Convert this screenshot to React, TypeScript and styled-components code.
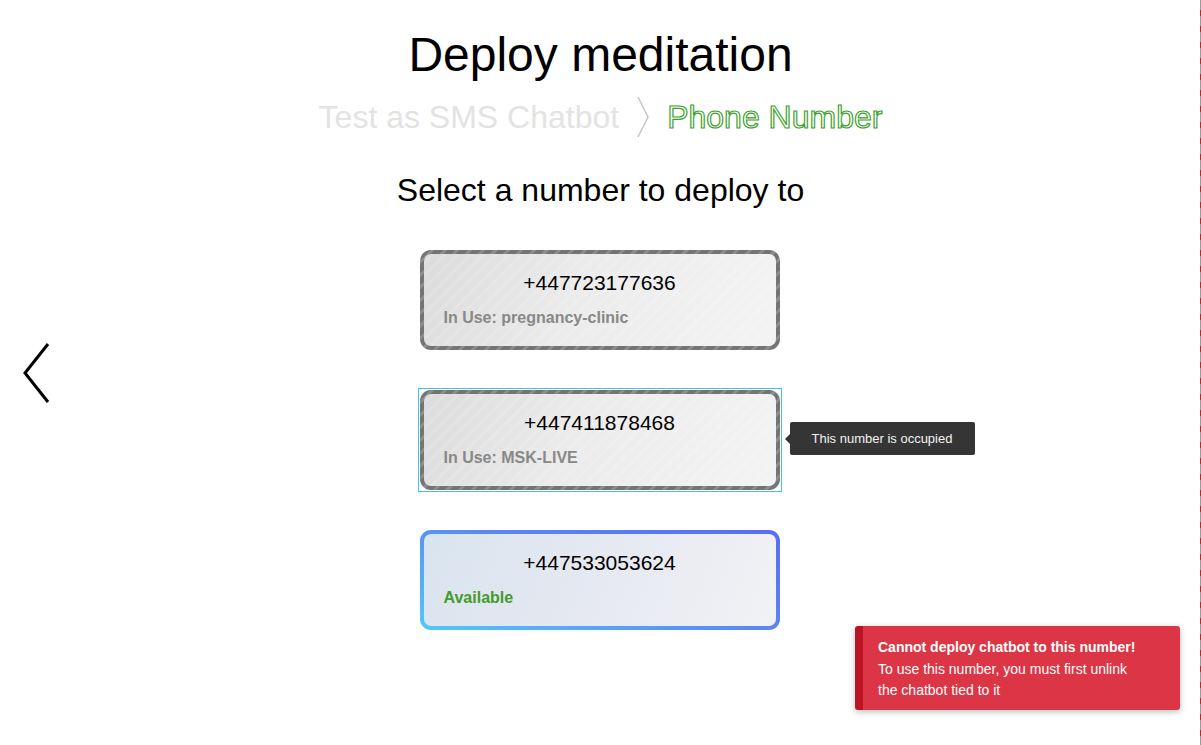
import styled, { createGlobalStyle, css } from "styled-components";

const GlobalStyle = createGlobalStyle`
    html, body {
        margin: 0;
        padding: 0;
        background: #ffffff;
        font-family: "Liberation Sans", Arial, sans-serif;
    }
`;

type NumberItem = {
    phone: string;
    status: string;
    inUse: boolean;
    focused?: boolean;
};

const numbers: NumberItem[] = [
    { phone: "+447723177636", status: "In Use: pregnancy-clinic", inUse: true },
    { phone: "+447411878468", status: "In Use: MSK-LIVE", inUse: true, focused: true },
    { phone: "+447533053624", status: "Available", inUse: false },
];

const BackIcon = () => (
    <svg width="30" height="62" viewBox="0 0 30 62" fill="none">
        <path d="M27 2 L4 31 L27 60" stroke="#000" strokeWidth="3" />
    </svg>
);

const CrumbChevron = () => (
    <svg width="16" height="42" viewBox="0 0 16 42" fill="none">
        <path d="M3 1 L13 21 L3 41" stroke="#c8c8c8" strokeWidth="1.6" />
    </svg>
);

export default function App() {
    return (
        <Page>
            <GlobalStyle />
            <BackButton aria-label="Back">
                <BackIcon />
            </BackButton>
            <Title>Deploy meditation</Title>
            <Breadcrumb>
                <CrumbPast>Test as SMS Chatbot</CrumbPast>
                <CrumbChevron />
                <CrumbCurrent>Phone Number</CrumbCurrent>
            </Breadcrumb>
            <Heading>Select a number to deploy to</Heading>
            <CardList>
                {numbers.map((n) => (
                    <CardSlot key={n.phone} $focused={n.focused}>
                        <Card $inUse={n.inUse}>
                            <Phone>{n.phone}</Phone>
                            <Status $inUse={n.inUse}>{n.status}</Status>
                        </Card>
                        {n.focused && <Tooltip>This number is occupied</Tooltip>}
                    </CardSlot>
                ))}
            </CardList>
            <Toast>
                <ToastTitle>Cannot deploy chatbot to this number!</ToastTitle>
                <ToastBody>
                    To use this number, you must first unlink
                    <br />
                    the chatbot tied to it
                </ToastBody>
            </Toast>
            <EdgeLine />
        </Page>
    );
}

const Page = styled.div`
    position: relative;
    width: 1201px;
    height: 745px;
    overflow: hidden;
    display: flex;
    flex-direction: column;
    align-items: center;
    padding-top: 26px;
    box-sizing: border-box;
`;

const BackButton = styled.button`
    position: absolute;
    left: 21px;
    top: 342px;
    padding: 0;
    border: none;
    background: none;
    display: flex;
`;

const Title = styled.h1`
    margin: 0;
    font-size: 48px;
    font-weight: 400;
    line-height: 58px;
    color: #000;
`;

const Breadcrumb = styled.div`
    display: flex;
    align-items: center;
    gap: 16px;
    margin-top: 11px;
    height: 44px;
`;

const CrumbPast = styled.span`
    font-size: 32px;
    color: #e3e3e3;
`;

const CrumbCurrent = styled.span`
    font-size: 32px;
    color: #ffffff;
    -webkit-text-stroke: 1.2px #3f9f2e;
`;

const Heading = styled.h2`
    margin: 32px 0 0;
    font-size: 32px;
    font-weight: 400;
    line-height: 38px;
    color: #000;
`;

const CardList = styled.div`
    display: flex;
    flex-direction: column;
    gap: 40px;
    margin-top: 41px;
    transform: translateX(-1px);
`;

const CardSlot = styled.div<{ $focused?: boolean }>`
    position: relative;
    ${(p) =>
        p.$focused &&
        css`
            outline: 1px solid #3fc4f2;
            outline-offset: 1px;
        `}
`;

const Card = styled.div<{ $inUse: boolean }>`
    width: 360px;
    height: 100px;
    box-sizing: border-box;
    border: 4px solid transparent;
    border-radius: 11px;
    padding: 17px 20px 0;
    display: flex;
    flex-direction: column;
    background: ${(p) =>
        p.$inUse
            ? `repeating-linear-gradient(-45deg, rgba(255,255,255,0.12) 0 3px, rgba(0,0,0,0) 3px 9px) padding-box,
               linear-gradient(110deg, #dcdcdc 0%, #ececec 45%, #f3f3f4 100%) padding-box,
               repeating-linear-gradient(-45deg, #8c8c8c 0 3px, #747474 3px 9px) border-box`
            : `linear-gradient(110deg, #d9e4ef 0%, #e6e9f1 50%, #f1f2f5 100%) padding-box,
               linear-gradient(20deg, #52c8f8 0%, #5a86f2 55%, #5b6cf0 100%) border-box`};
`;

const Phone = styled.div`
    text-align: center;
    font-size: 21px;
    line-height: 24px;
    color: #000;
`;

const Status = styled.div<{ $inUse: boolean }>`
    margin-top: 13px;
    font-size: 16px;
    font-weight: 700;
    line-height: 20px;
    color: ${(p) => (p.$inUse ? "#888888" : "#449a2a")};
`;

const Tooltip = styled.div`
    position: absolute;
    left: 370px;
    top: 32px;
    width: 185px;
    height: 33px;
    box-sizing: border-box;
    background: #353535;
    color: #f2f2f2;
    border-radius: 2px;
    font-size: 13px;
    display: flex;
    align-items: center;
    justify-content: center;

    &::before {
        content: "";
        position: absolute;
        left: -5px;
        top: 12px;
        border-style: solid;
        border-width: 5px 5px 5px 0;
        border-color: transparent #353535 transparent transparent;
    }
`;

const Toast = styled.div`
    position: absolute;
    left: 855px;
    top: 626px;
    width: 325px;
    height: 84px;
    box-sizing: border-box;
    background: #dc3545;
    border-left: 8px solid #bb1425;
    border-radius: 3px;
    box-shadow: 0 2px 6px rgba(0, 0, 0, 0.25);
    padding: 11px 15px;
    color: #ffffff;
    font-size: 14px;
`;

const ToastTitle = styled.div`
    font-weight: 700;
    line-height: 20px;
`;

const ToastBody = styled.div`
    margin-top: 2px;
    line-height: 21px;
`;

const EdgeLine = styled.div`
    position: absolute;
    right: 0;
    top: 0;
    width: 1px;
    height: 100%;
    background: repeating-linear-gradient(180deg, #9a9a9a 0 10px, #b72a2a 10px 16px);
`;
